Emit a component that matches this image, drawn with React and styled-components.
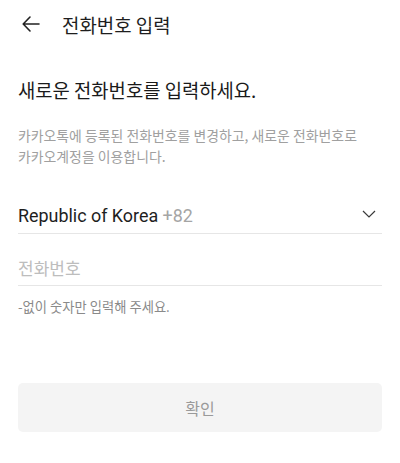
import React from "react";
import styled, { createGlobalStyle } from "styled-components";

const Global = createGlobalStyle`
  html, body { margin: 0; padding: 0; background: #fff; }
  body { font-family: Roboto, "Noto Sans CJK KR", sans-serif; color: #1e1e1e; }
  * { box-sizing: border-box; }
`;

const Page = styled.div`
  width: 400px;
  height: 463px;
  display: flex;
  flex-direction: column;
  padding: 0 18px;
`;

const Header = styled.header`
  height: 48px;
  display: flex;
  align-items: center;
  gap: 22px;
  margin-left: 4px;
`;

const BackButton = styled.button`
  border: 0;
  background: none;
  padding: 0;
  width: 18px;
  height: 18px;
  display: flex;
  color: #222;
`;

const Title = styled.h1`
  margin: 0;
  font-size: 18.9px;
  font-weight: 400;
  font-family: "Noto Sans CJK KR", sans-serif;
  color: #1e1e1e;
`;

const Heading = styled.h2`
  margin: 28px 0 0;
  font-size: 18.8px;
  line-height: 28px;
  font-weight: 400;
  font-family: "Noto Sans CJK KR", sans-serif;
  color: #1a1a1a;
`;

const Description = styled.p`
  margin: 21px 0 0;
  font-size: 13.9px;
  line-height: 21px;
  font-family: "Noto Sans CJK KR", sans-serif;
  color: #a0a0a0;
`;

const Field = styled.div`
  display: flex;
  align-items: center;
  justify-content: space-between;
  height: 52px;
  padding-top: 16px;
  margin-top: ${(p) => p.$mt || 0}px;
  border-bottom: 1px solid #e6e6e6;
`;

const Country = styled.span`
  font-size: 17.9px;
  font-family: Roboto, sans-serif;
  color: #1e1e1e;
`;

const Code = styled.span`
  color: #a5a5a5;
`;

const Chevron = styled.svg`
  margin: 0 6px 4px 0;
  color: #3a3a3a;
`;

const Placeholder = styled.span`
  font-size: 17px;
  font-family: "Noto Sans CJK KR", sans-serif;
  color: #bdbdbd;
`;

const Hint = styled.p`
  margin: 11px 0 0;
  font-size: 13.3px;
  font-family: "Noto Sans CJK KR", sans-serif;
  color: #8a8a8a;
`;

const Confirm = styled.button`
  margin-top: auto;
  margin-bottom: 31px;
  height: 49px;
  width: 100%;
  border: 0;
  border-radius: 5px;
  background: #f4f4f4;
  font-size: 16px;
  font-family: "Noto Sans CJK KR", sans-serif;
  color: #9a9a9a;
`;

export default function App() {
  return (
    <>
      <Global />
      <Page>
        <Header>
          <BackButton aria-label="back">
            <svg width="18" height="18" viewBox="0 0 18 18" fill="none" stroke="currentColor" strokeWidth="1.6" strokeLinecap="round" strokeLinejoin="round">
              <path d="M17 9H1.5M8 2L1.2 9L8 16" />
            </svg>
          </BackButton>
          <Title>전화번호 입력</Title>
        </Header>
        <Heading>새로운 전화번호를 입력하세요.</Heading>
        <Description>
          카카오톡에 등록된 전화번호를 변경하고, 새로운 전화번호로
          <br />
          카카오계정을 이용합니다.
        </Description>
        <Field $mt={15}>
          <Country>
            Republic of Korea <Code>+82</Code>
          </Country>
          <Chevron width="14" height="8" viewBox="0 0 14 8" fill="none" stroke="currentColor" strokeWidth="1.2">
            <path d="M1 1l6 6 6-6" />
          </Chevron>
        </Field>
        <Field>
          <Placeholder>전화번호</Placeholder>
        </Field>
        <Hint>-없이 숫자만 입력해 주세요.</Hint>
        <Confirm>확인</Confirm>
      </Page>
    </>
  );
}
